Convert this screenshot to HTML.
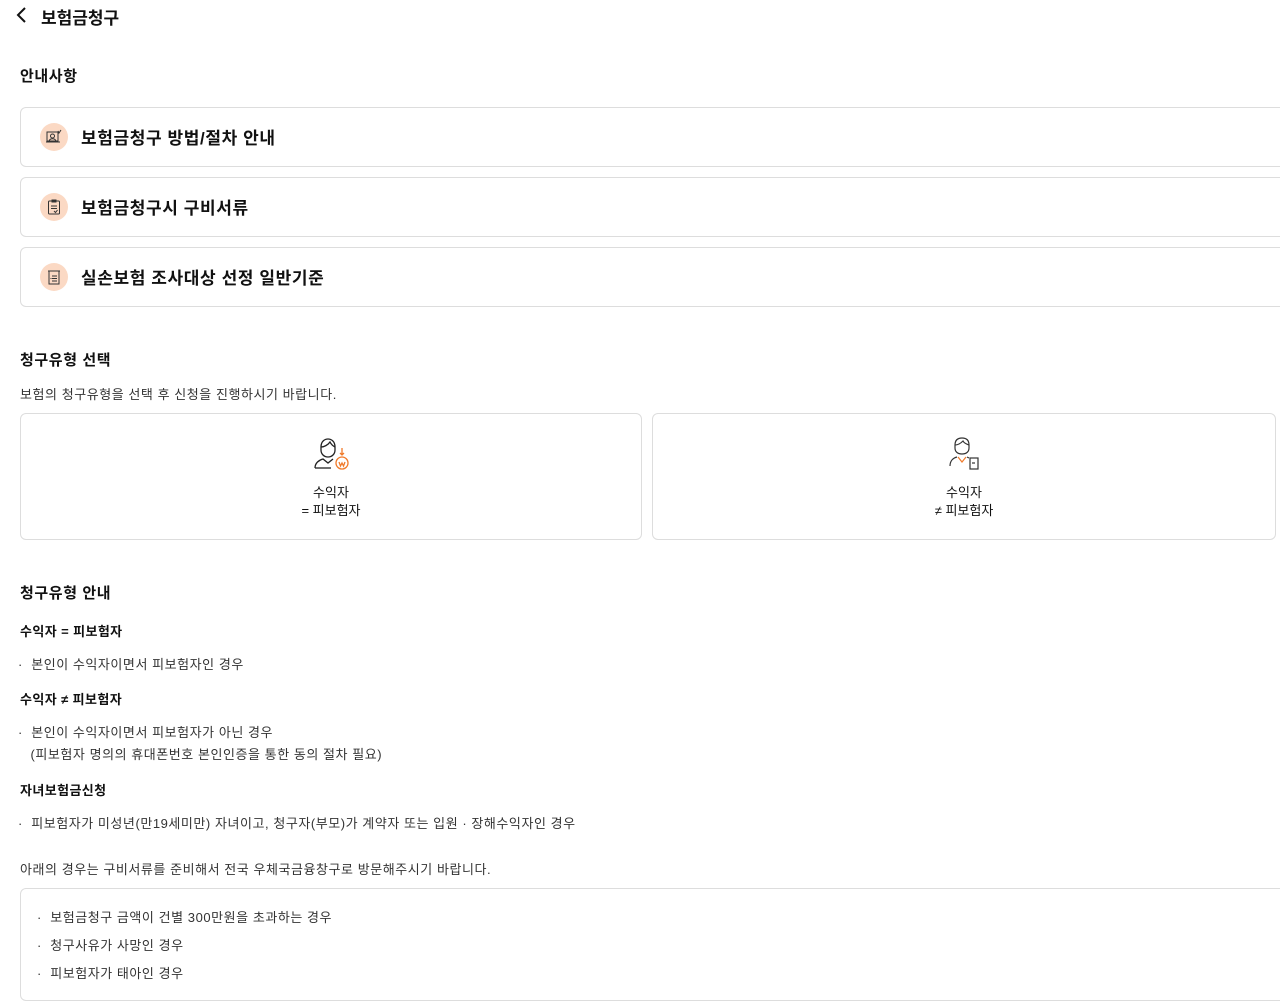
<!DOCTYPE html>
<html><head><meta charset="utf-8"><style>
*{margin:0;padding:0;box-sizing:border-box}
body{width:1280px;height:1007px;overflow:hidden;background:#fff;font-family:"Liberation Sans","Noto Sans CJK KR",sans-serif;color:#111;position:relative}
.a{position:absolute;white-space:nowrap}
.box{position:absolute;border:1px solid #ddd;border-radius:6px;background:#fff}
.ic{position:absolute;left:19px;top:15px;width:28px;height:28px;border-radius:50%;background:#fbd9c4}
.ic svg{position:absolute;left:6px;top:6px}
.t{position:absolute;left:60px;top:16px;font-size:17px;font-weight:bold;letter-spacing:0.6px}
.h{font-size:15px;font-weight:bold;letter-spacing:0.6px}
.s{font-size:13px;color:#333;letter-spacing:0.55px}
.b{font-size:13px;font-weight:bold;letter-spacing:0.4px}
</style></head><body>
<svg class="a" style="left:15px;top:6px" width="14" height="18" viewBox="0 0 14 18"><path d="M10 2 L3 9 L10 16" fill="none" stroke="#111" stroke-width="2"/></svg>
<div class="a" style="left:41px;top:4px;font-size:17px;font-weight:bold">보험금청구</div>
<div class="a h" style="left:20px;top:65px">안내사항</div>

<div class="box" style="left:20px;top:107px;width:1280px;height:60px"><div class="ic"><svg width="16" height="16" viewBox="0 0 16 16" fill="none" stroke="#333" stroke-width="1"><rect x="1" y="3" width="11" height="9"/><circle cx="6.5" cy="7" r="2"/><path d="M3 12c1-3 6-3 7 0M0 13h14M12 2l1 2 2-3"/></svg></div><div class="t">보험금청구 방법/절차 안내</div></div>
<div class="box" style="left:20px;top:177px;width:1280px;height:60px"><div class="ic"><svg width="16" height="16" viewBox="0 0 16 16" fill="none" stroke="#333" stroke-width="1"><rect x="2.5" y="2" width="11" height="13" rx="1"/><path d="M6 1h4v2H6zM5 7h6M5 9.5h6M8 12l1.5 1.5 2-2.5"/></svg></div><div class="t">보험금청구시 구비서류</div></div>
<div class="box" style="left:20px;top:247px;width:1280px;height:60px"><div class="ic"><svg width="16" height="16" viewBox="0 0 16 16" fill="none" stroke="#333" stroke-width="1"><rect x="3" y="2" width="10" height="13"/><path d="M2 2h12M6 7h5M6 9.5h5M6 12h5M4.5 9.5l1 0"/></svg></div><div class="t">실손보험 조사대상 선정 일반기준</div></div>

<div class="a h" style="left:20px;top:349px">청구유형 선택</div>
<div class="a s" style="left:20px;top:384px">보험의 청구유형을 선택 후 신청을 진행하시기 바랍니다.</div>

<div class="box" style="left:20px;top:413px;width:622px;height:127px">
<svg class="a" style="left:292px;top:22px" width="40" height="40" viewBox="0 0 40 40" fill="none" stroke-width="1.3"><g stroke="#222"><path d="M8 11c0-6 4-8 7-8s7 2 7 8v3c0 4-3 7-7 7s-7-3-7-7z"/><path d="M8 11c3 0 7-2 9-5 1 2 3 4 5 5"/><path d="M2 32c0-5 4-8 8-9l5 4 5-4"/><path d="M2 32h16"/></g><g stroke="#f07a2a"><circle cx="29" cy="27" r="6"/><path d="M29 12v7M27 17l2 2 2-2M26 26l1.5 4 1.5-3 1.5 3 1.5-4"/></g></svg>
<div class="a" style="left:0;width:620px;top:70px;text-align:center;font-size:13px;line-height:18px">수익자<br>= 피보험자</div></div>
<div class="box" style="left:652px;top:413px;width:624px;height:127px">
<svg class="a" style="left:294px;top:22px" width="34" height="36" viewBox="0 0 34 36" fill="none" stroke-width="1.2"><g stroke="#333"><path d="M8 9c0-5 3-7 7-7s7 2 7 7v3c0 4-3 6-7 6s-7-2-7-6z"/><path d="M8 9c3 0 6-2 8-4 1 2 3 3 6 4"/><path d="M3 30c0-5 3-8 7-9M20 21l2 1"/><rect x="23" y="22" width="8" height="11"/><path d="M25 27h3"/></g><path d="M11 21l4 5 4-5" stroke="#f07a2a"/></svg>
<div class="a" style="left:0;width:622px;top:70px;text-align:center;font-size:13px;line-height:18px">수익자<br>≠ 피보험자</div></div>

<div class="a h" style="left:20px;top:582px">청구유형 안내</div>
<div class="a b" style="left:20px;top:621px">수익자 = 피보험자</div>
<div class="a s" style="left:18px;top:654px">· &nbsp;본인이 수익자이면서 피보험자인 경우</div>
<div class="a b" style="left:20px;top:689px">수익자 ≠ 피보험자</div>
<div class="a s" style="left:18px;top:722px;line-height:22px">· &nbsp;본인이 수익자이면서 피보험자가 아닌 경우<br>&nbsp;&nbsp;&nbsp;(피보험자 명의의 휴대폰번호 본인인증을 통한 동의 절차 필요)</div>
<div class="a b" style="left:20px;top:780px">자녀보험금신청</div>
<div class="a s" style="left:18px;top:813px">· &nbsp;피보험자가 미성년(만19세미만) 자녀이고, 청구자(부모)가 계약자 또는 입원 · 장해수익자인 경우</div>
<div class="a s" style="left:20px;top:859px">아래의 경우는 구비서류를 준비해서 전국 우체국금융창구로 방문해주시기 바랍니다.</div>
<div class="box" style="left:20px;top:888px;width:1280px;height:113px">
<div class="a s" style="left:16px;top:15px;line-height:28px">· &nbsp;보험금청구 금액이 건별 300만원을 초과하는 경우<br>· &nbsp;청구사유가 사망인 경우<br>· &nbsp;피보험자가 태아인 경우</div></div>
</body></html>
